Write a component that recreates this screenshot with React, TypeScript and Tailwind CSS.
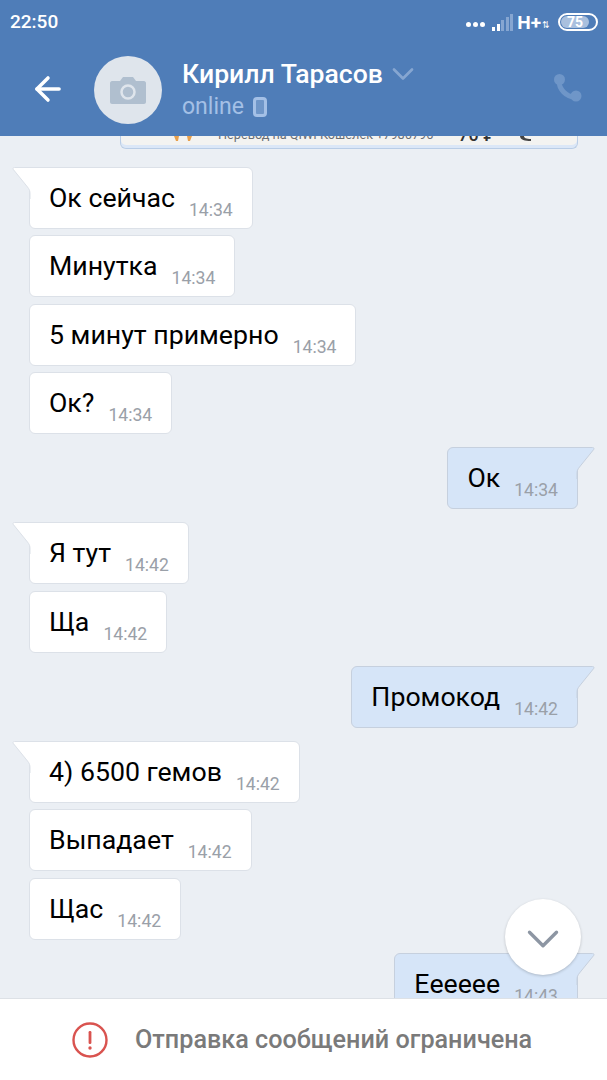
import { ArrowLeft, ChevronDown } from "lucide-react";

type Message = { text: string; time: string };

const groups: { out: boolean; items: Message[] }[] = [
  {
    out: false,
    items: [
      { text: "Ок сейчас", time: "14:34" },
      { text: "Минутка", time: "14:34" },
      { text: "5 минут примерно", time: "14:34" },
      { text: "Ок?", time: "14:34" },
    ],
  },
  { out: true, items: [{ text: "Ок", time: "14:34" }] },
  {
    out: false,
    items: [
      { text: "Я тут", time: "14:42" },
      { text: "Ща", time: "14:42" },
    ],
  },
  { out: true, items: [{ text: "Промокод", time: "14:42" }] },
  {
    out: false,
    items: [
      { text: "4) 6500 гемов", time: "14:42" },
      { text: "Выпадает", time: "14:42" },
      { text: "Щас", time: "14:42" },
    ],
  },
  { out: true, items: [{ text: "Еeeeee", time: "14:43" }] },
];

function Tail({ out }: { out: boolean }) {
  if (out) {
    return (
      <svg className="absolute -right-[18px] -top-px" width="19" height="32" viewBox="0 0 19 32">
        <path d="M0 .5H16.5C18 .5 18.4 1.6 17.6 2.6L3.5 20C1.6 22.4 1 24 1 27V32H0Z" fill="#d6e5f8" />
        <path d="M0 .5H16.5C18 .5 18.4 1.6 17.6 2.6L3.5 20C1.6 22.4 1 24 1 27V32" fill="none" stroke="#c6d0de" />
      </svg>
    );
  }
  return (
    <svg className="absolute -left-[18px] -top-px" width="19" height="32" viewBox="0 0 19 32">
      <path d="M19 .5H2.5C1 .5.6 1.6 1.4 2.6L15.5 20C17.4 22.4 18 24 18 27V32H19Z" fill="#ffffff" />
      <path d="M19 .5H2.5C1 .5.6 1.6 1.4 2.6L15.5 20C17.4 22.4 18 24 18 27V32" fill="none" stroke="#dce1e8" />
    </svg>
  );
}

function Bubble({ msg, out, tail }: { msg: Message; out: boolean; tail: boolean }) {
  return (
    <div
      className={`relative flex h-[62px] shrink-0 items-start gap-[14px] rounded-[6px] border px-[19px] ${
        out ? "self-end border-[#c6d0de] bg-[#d6e5f8]" : "self-start border-[#dce1e8] bg-white"
      } ${tail && out ? "rounded-tr-none" : ""} ${tail && !out ? "rounded-tl-none" : ""}`}
    >
      {tail && <Tail out={out} />}
      <span className="pt-[13px] text-[26.7px] leading-[34px] whitespace-nowrap text-black">{msg.text}</span>
      <span className="pt-[31px] text-[17.6px] leading-[22px] text-[#9aa0a8]">{msg.time}</span>
    </div>
  );
}

function SignalBars() {
  const heights = [4, 7, 11, 14, 17];
  return (
    <div className="flex items-end gap-[1.5px]">
      {heights.map((h, i) => (
        <svg key={i} width="3" height={h} className={i < 2 ? "text-white" : "text-[#86a6d1]"}>
          <rect width="3" height={h} fill="currentColor" />
        </svg>
      ))}
    </div>
  );
}

function CameraIcon() {
  return (
    <svg width="36" height="27" viewBox="0 0 36 27">
      <path
        d="M2 4H10L13 0H23L26 4H34C35 4 36 5 36 6V25C36 26 35 27 34 27H2C1 27 0 26 0 25V6C0 5 1 4 2 4Z"
        fill="#b0bfcf"
      />
      <circle cx="18" cy="15" r="6.5" fill="none" stroke="#dfe5ec" strokeWidth="2.5" />
    </svg>
  );
}

export default function App() {
  return (
    <div className="relative flex h-[1080px] w-[607px] flex-col overflow-hidden bg-[#ebeff4] font-['Roboto',sans-serif]">
      <header className="z-10 h-[136px] shrink-0 bg-[#4f7db8]">
        <div className="flex h-[44px] items-center justify-between pr-[9px] pl-[10px] text-white">
          <span className="text-[19px] font-medium">22:50</span>
          <div className="flex items-center">
            <div className="mt-[4px] mr-[7px] flex gap-[2px]">
              <span className="h-[5px] w-[5px] rounded-full bg-white" />
              <span className="h-[5px] w-[5px] rounded-full bg-white" />
              <span className="h-[5px] w-[5px] rounded-full bg-white" />
            </div>
            <SignalBars />
            <span className="ml-[4px] text-[19px] leading-none font-bold">H+</span>
            <span className="mt-[6px] ml-[1px] w-[10px] text-[9px] leading-none">⇅</span>
            <div className="ml-[6px] flex h-[18px] w-[40px] items-center rounded-full border-2 border-white p-[1px]">
              <span className="flex h-[12px] w-[28px] items-center justify-center rounded-full bg-[#a9c0de] text-[14px] font-bold text-white">
                75
              </span>
            </div>
          </div>
        </div>
        <div className="flex h-[92px] items-start">
          <ArrowLeft className="mt-[26px] ml-[29px] text-white" size={38} strokeWidth={2.2} />
          <div className="mt-[12px] ml-[27px] flex h-[68px] w-[68px] items-center justify-center rounded-full bg-[#dfe5ec]">
            <CameraIcon />
          </div>
          <div className="mt-[12px] ml-[20px] flex-1">
            <div className="flex h-[36px] items-center">
              <span className="text-[26.6px] font-medium text-white">Кирилл Тарасов</span>
              <ChevronDown className="ml-[2px] text-[#86a6d1]" size={36} strokeWidth={1.8} />
            </div>
            <div className="flex items-center leading-[30px]">
              <span className="text-[23px] text-[#a4c0e6]">online</span>
              <svg className="ml-[9px]" width="14" height="20" viewBox="0 0 14 20">
                <rect x="1.5" y="1.5" width="11" height="17" rx="2.5" fill="#6f96c8" stroke="#a4c0e6" strokeWidth="3" />
              </svg>
            </div>
          </div>
          <svg className="mt-[29px] mr-[25px]" width="29" height="29" viewBox="0 0 29 29">
            <path d="M6 8C6 16 13 24 22 24" fill="none" stroke="#6f96c8" strokeWidth="5" />
            <circle cx="6.5" cy="6.5" r="5.5" fill="#6f96c8" />
            <circle cx="23" cy="23" r="5.5" fill="#6f96c8" />
          </svg>
        </div>
      </header>

      <main className="relative flex min-h-0 flex-1 flex-col overflow-hidden px-[29px]">
        <div className="ml-[91px] flex h-[13px] shrink-0 items-start overflow-hidden rounded-b-[6px] border border-t-0 border-[#b9cde6] bg-[#f3f3f1] pl-[52px] shadow-[inset_0_-3px_0_#dbe7f7]">
          <svg className="mr-[25px] shrink-0" width="20" height="5" viewBox="0 0 20 5">
            <path d="M1 0L6 0L5 5L3 5ZM14 0L19 0L17 5L15 5Z" fill="#e8a04c" />
          </svg>
          <span className="-mt-[10px] text-[12.7px] leading-[18px] whitespace-nowrap text-[#6a6e74]">
            Перевод на QIWI Кошелек +7986796
          </span>
          <span className="-mt-[10px] ml-[25px] text-[18px] leading-[18px] font-medium text-[#333]">70 ₽</span>
          <svg className="ml-[24px] shrink-0" width="12" height="5" viewBox="0 0 12 5">
            <path d="M0 0H4C4 2 6 3 11 3V5C5 5 0 4 0 0Z" fill="#444" />
          </svg>
        </div>
        <div className="mt-[17.5px] flex flex-col gap-[13px]">
          {groups.map((group, g) => (
            <div key={g} className="flex flex-col gap-[6.5px]">
              {group.items.map((msg, i) => (
                <Bubble key={i} msg={msg} out={group.out} tail={i === 0} />
              ))}
            </div>
          ))}
        </div>
        <button className="absolute top-[763px] right-[26px] flex h-[76px] w-[76px] items-center justify-center rounded-full bg-white shadow-[0_1px_3px_rgba(0,0,0,0.2)]">
          <ChevronDown className="mt-[4px] text-[#8d96a3]" size={54} strokeWidth={1.5} />
        </button>
      </main>

      <footer className="z-10 flex h-[82px] shrink-0 items-center border-t border-[#dde1e6] bg-white pl-[72px]">
        <svg width="36" height="36" viewBox="0 0 36 36">
          <circle cx="18" cy="18" r="16.5" fill="none" stroke="#d9534f" strokeWidth="2.4" />
          <rect x="16.6" y="9" width="2.8" height="13" rx="1.2" fill="#d9534f" />
          <circle cx="18" cy="26" r="1.7" fill="#d9534f" />
        </svg>
        <span className="ml-[27px] text-[25.2px] font-medium whitespace-nowrap text-[#7a7a7a]">Отправка сообщений ограничена</span>
      </footer>
    </div>
  );
}
